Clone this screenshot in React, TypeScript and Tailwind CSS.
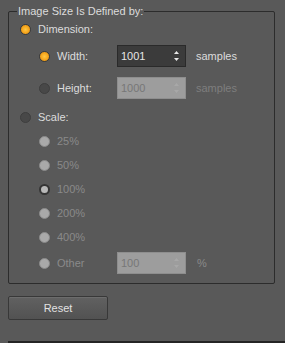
import React from 'react';

type RadioKind = 'on' | 'off' | 'disabledOff' | 'disabledOn';

const Radio: React.FC<{ kind: RadioKind }> = ({ kind }) => {
  if (kind === 'on') {
    return (
      <span className="w-[11px] h-[11px] rounded-full border border-[#3a3a3a] bg-[radial-gradient(circle,#ffc843_0%,#f5a41c_55%,#d88a10_100%)] shrink-0" />
    );
  }
  if (kind === 'off') {
    return <span className="w-[11px] h-[11px] rounded-full border border-[#3e3e3e] bg-[#484848] shrink-0" />;
  }
  if (kind === 'disabledOn') {
    return (
      <span className="w-[11px] h-[11px] rounded-full border-[2px] border-[#353535] bg-[#b9b9b9] shrink-0" />
    );
  }
  return <span className="w-[11px] h-[11px] rounded-full border border-[#8a8a8a] bg-[#a9a9a9] shrink-0" />;
};

const Spinner: React.FC<{ value: string; disabled?: boolean }> = ({ value, disabled }) => (
  <div
    className={
      disabled
        ? 'w-[69px] h-[22px] flex items-center justify-between pl-[3px] pr-[5px] bg-[#9d9d9d] border border-[#8e8e8e] text-[#777777]'
        : 'w-[69px] h-[22px] flex items-center justify-between pl-[3px] pr-[5px] bg-[#3b3b3b] border border-[#2a2a2a] text-[#e6e6e6]'
    }
  >
    <span className="text-[11px]">{value}</span>
    <svg width="7" height="14" viewBox="0 0 7 14">
      <path d="M3.5 2 L6 5 L1 5 Z" fill={disabled ? '#a8a8a8' : '#e8e8e8'} />
      <path d="M1 9 L6 9 L3.5 12 Z" fill={disabled ? '#a8a8a8' : '#e8e8e8'} />
    </svg>
  </div>
);

const scaleOptions: { label: string; kind: RadioKind }[] = [
  { label: '25%', kind: 'disabledOff' },
  { label: '50%', kind: 'disabledOff' },
  { label: '100%', kind: 'disabledOn' },
  { label: '200%', kind: 'disabledOff' },
  { label: '400%', kind: 'disabledOff' },
];

export default function App() {
  return (
    <div className="w-[285px] h-[343px] bg-[#595959] flex flex-col pl-2 pt-1 font-['Liberation_Sans',Arial,sans-serif] text-[11px] text-[#dcdcdc]">
      <fieldset className="w-[267px] h-[280px] p-0 m-0 border border-[#2c2c2c] rounded-[2px]">
        <legend className="ml-[8px] px-[1px] leading-[14px] text-[11px] text-[#dcdcdc]">Image Size Is Defined by:</legend>
        <div className="flex flex-col pl-[11px]">
          <div className="h-[22px] flex items-center">
            <Radio kind="on" />
            <span className="ml-[7px]">Dimension:</span>
          </div>

          <div className="pl-[19px] flex flex-col">
            <div className="mt-[5px] h-[22px] flex items-center">
              <Radio kind="on" />
              <span className="ml-[7px] w-[60px]">Width:</span>
              <Spinner value="1001" />
              <span className="ml-[10px]">samples</span>
            </div>
            <div className="mt-[10px] h-[22px] flex items-center">
              <Radio kind="off" />
              <span className="ml-[7px] w-[60px]">Height:</span>
              <Spinner value="1000" disabled />
              <span className="ml-[10px] text-[#7e7e7e]">samples</span>
            </div>
          </div>

          <div className="mt-[7px] h-[22px] flex items-center">
            <Radio kind="off" />
            <span className="ml-[7px]">Scale:</span>
          </div>

          <div className="pl-[19px] mt-[1px] flex flex-col">
            {scaleOptions.map((o) => (
              <div key={o.label} className="h-[24px] flex items-center">
                <Radio kind={o.kind} />
                <span className="ml-[7px] text-[#8a8a8a]">{o.label}</span>
              </div>
            ))}
            <div className="mt-[3px] h-[22px] flex items-center">
              <Radio kind="disabledOff" />
              <span className="ml-[7px] w-[60px] text-[#8a8a8a]">Other</span>
              <Spinner value="100" disabled />
              <span className="ml-[11px] text-[#8a8a8a]">%</span>
            </div>
          </div>
        </div>
      </fieldset>

      <button className="mt-[12px] w-[100px] h-[24px] rounded-[2px] border border-[#383838] bg-[linear-gradient(#616161,#525252)] text-[11px] text-[#e2e2e2] shadow-[inset_0_1px_0_#6c6c6c]">
        Reset
      </button>

      <div className="mt-auto h-[2px] bg-[#242424]" />
    </div>
  );
}
